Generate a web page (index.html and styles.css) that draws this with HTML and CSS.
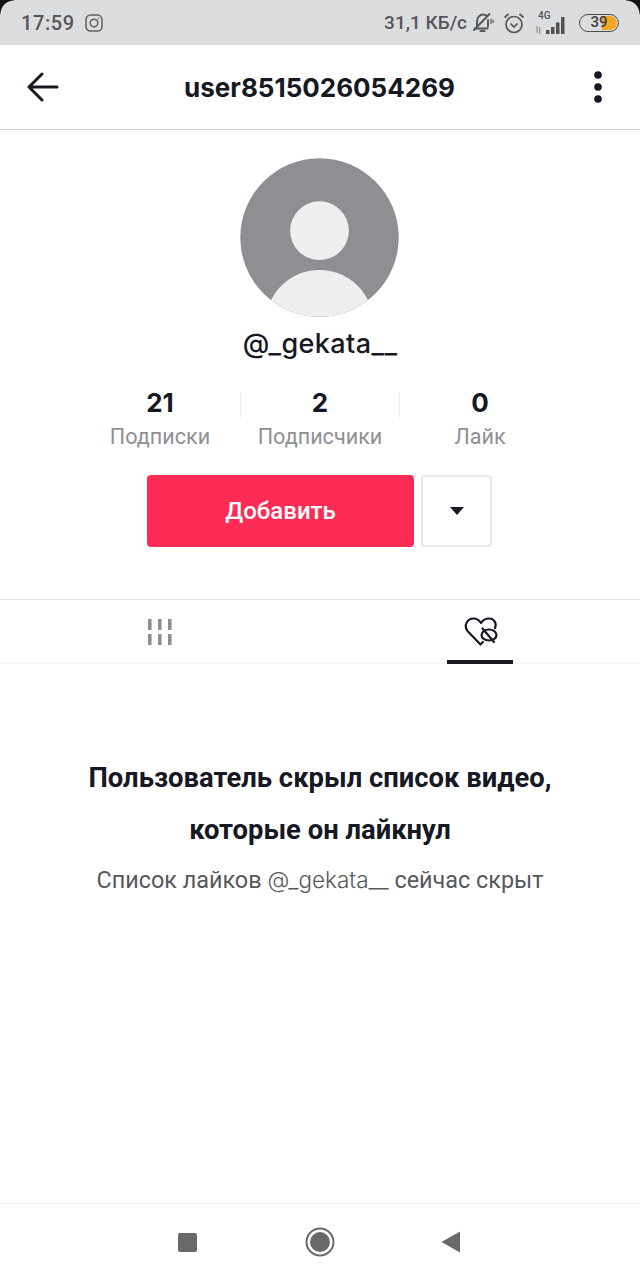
FILE: index.html
```html
<!DOCTYPE html>
<html>
<head>
    <title>user8515026054269</title>
    <link rel="stylesheet" href="styles.css">
</head>
<body>
<div class="phone">
    <div class="status">
        <span class="corner corner-left"></span>
        <span class="corner corner-right"></span>
        <div class="status-left">
            <span class="time">17:59</span>
            <svg class="insta" width="18" height="18" viewBox="0 0 18 18" fill="none" stroke="#5f6062" stroke-width="1.5">
                <rect x="1" y="1" width="16" height="16" rx="4.5"/>
                <circle cx="9" cy="9" r="3.8"/>
                <circle cx="13.4" cy="4.6" r="0.8" fill="#5f6062" stroke="none"/>
            </svg>
        </div>
        <div class="status-right">
            <span class="speed">31,1 КБ/с</span>
            <svg class="bell" width="22" height="22" viewBox="0 0 22 22" fill="none" stroke="#55565a" stroke-width="1.900" stroke-linecap="round">
                <path d="M3 16.500h12.500M5 14.500V9.500C5 5 8 2.500 11 2.500c1.500 0 3 .5 4 1.500M16 8v6.500"/>
                <path d="M8.500 19h4" stroke-width="2.200"/>
                <path d="M2 18L17.500 2"/>
                <path d="M19 7v4.500M21 8v2.500" stroke-width="1.200"/>
            </svg>
            <svg class="alarm" width="22" height="22" viewBox="0 0 22 22" fill="none" stroke="#55565a" stroke-width="1.700">
                <circle cx="11" cy="12.500" r="8"/>
                <path d="M7.500 11.500l3.500 3.500 3.500-3.500"/>
                <path d="M1.500 5.500L5.500 2M20.500 5.500L16.500 2"/>
            </svg>
            <div class="signal">
                <span class="net">4G</span>
                <svg width="34" height="18" viewBox="0 0 34 18" fill="#505155">
                    <path d="M0.500 9h1.300v7H0.500zM3 10h1.300v7H3z" opacity="0.5"/>
                    <rect x="10" y="13" width="3.500" height="4"/>
                    <rect x="15" y="10" width="3.500" height="7"/>
                    <rect x="20" y="5.500" width="3.500" height="11.500"/>
                    <rect x="25" y="0" width="3.500" height="17"/>
                </svg>
            </div>
            <div class="battery">
                <span class="battery-fill"></span>
                <span class="battery-num">39</span>
            </div>
        </div>
    </div>

    <div class="topbar">
        <svg width="34" height="30" viewBox="0 0 34 30" fill="none" stroke="#161823" stroke-width="3" stroke-linecap="round" stroke-linejoin="round">
            <path d="M31 15H3M16 2L3 15l13 13"/>
        </svg>
        <h1 class="nick">user8515026054269</h1>
        <svg class="more" width="10" height="32" viewBox="0 0 10 32" fill="#161823">
            <circle cx="5" cy="4" r="3.800"/>
            <circle cx="5" cy="16" r="3.800"/>
            <circle cx="5" cy="28" r="3.800"/>
        </svg>
    </div>

    <div class="profile">
        <svg class="avatar" width="159" height="159" viewBox="0 0 159 159">
            <defs><clipPath id="round"><circle cx="79.500" cy="79.500" r="79.200"/></clipPath></defs>
            <circle cx="79.500" cy="79.500" r="79.200" fill="#8e8f93"/>
            <circle cx="79.500" cy="72.700" r="29.400" fill="#efefef"/>
            <circle cx="79.500" cy="166" r="54" fill="#efefef" clip-path="url(#round)"/>
        </svg>
        <div class="handle">@_gekata__</div>
        <div class="stats">
            <div class="stat">
                <b>21</b>
                <span>Подписки</span>
            </div>
            <div class="stat stat-mid">
                <b>2</b>
                <span>Подписчики</span>
            </div>
            <div class="stat">
                <b>0</b>
                <span>Лайк</span>
            </div>
        </div>
        <div class="actions">
            <button class="add">Добавить</button>
            <button class="drop"><span class="caret"></span></button>
        </div>
    </div>

    <div class="tabs">
        <div class="tab">
            <svg width="24" height="27" viewBox="0 0 24 27" fill="#909090">
                <rect x="0" y="0" width="3.600" height="11"/>
                <rect x="10" y="0" width="3.600" height="11"/>
                <rect x="20" y="0" width="3.600" height="11"/>
                <rect x="0" y="15" width="3.600" height="11"/>
                <rect x="10" y="15" width="3.600" height="11"/>
                <rect x="20" y="15" width="3.600" height="11"/>
            </svg>
        </div>
        <div class="tab tab-active">
            <svg width="35" height="29" viewBox="0 0 35 29" fill="none" stroke="#161823" stroke-width="2.200" stroke-linecap="round" stroke-linejoin="round">
                <path d="M19 25l-2.500 2.500L3.500 14C-.5 9 3 1.500 9.500 1.500c3 0 5.500 1.500 7.500 4.500 2-3 5-4.500 8-4.500 5 0 8 4.500 6 9.500"/>
                <ellipse cx="25" cy="18" rx="7.500" ry="5.500"/>
                <path d="M18.500 11.500L30 25"/>
            </svg>
        </div>
    </div>

    <div class="empty">
        <h2>Пользователь скрыл список видео,<br>которые он лайкнул</h2>
        <p>Список лайков <span class="empty-handle">@_gekata__</span> сейчас скрыт</p>
    </div>

    <div class="navbar">
        <span class="nav-square"></span>
        <svg class="nav-home" width="30" height="30" viewBox="0 0 30 30">
            <circle cx="15" cy="15" r="13.500" fill="none" stroke="#696969" stroke-width="2"/>
            <circle cx="15" cy="15" r="10" fill="#696969"/>
        </svg>
        <svg width="19" height="22" viewBox="0 0 19 22" fill="#696969">
            <path d="M19 .5v21L.5 11z"/>
        </svg>
    </div>
</div>
</body>
</html>
```

FILE: styles.css
```css
html, body {
    margin: 0;
    height: 100%;
    background-color: #fff;
}

.phone {
    display: flex;
    flex-direction: column;
    width: 640px;
    height: 1280px;
    font-family: Roboto, "Liberation Sans", sans-serif;
    color: #161823;
    overflow: hidden;
}

/* status bar */
.status {
    position: relative;
    display: flex;
    justify-content: space-between;
    align-items: center;
    height: 45px;
    padding: 0 21px;
    box-sizing: border-box;
    background-color: #dcddde;
    color: #55565a;
}

.corner {
    position: absolute;
    top: 0;
    width: 14px;
    height: 14px;
    background: radial-gradient(circle at 100% 100%, transparent 13px, #111 14px);
}

.corner-left {
    left: 0;
}

.corner-right {
    right: 0;
    transform: scaleX(-1);
}

.status-left, .status-right {
    display: flex;
    align-items: center;
}

.time {
    font-size: 20px;
    font-weight: 500;
    letter-spacing: 0.6px;
    margin-right: 10px;
}

.speed {
    font-size: 19px;
    font-weight: 500;
    margin-right: 5px;
}

.bell {
    margin-right: 9px;
}

.alarm {
    margin-right: 11px;
}

.signal {
    position: relative;
    width: 34px;
    height: 24px;
    display: flex;
    align-items: flex-end;
}

.net {
    position: absolute;
    left: 2px;
    top: -1px;
    font-size: 10px;
    font-weight: 500;
}

.battery {
    position: relative;
    width: 40px;
    height: 18px;
    margin-left: 9px;
    border: 1.5px solid #4a4b4d;
    border-radius: 9px;
    box-sizing: border-box;
    overflow: hidden;
    text-align: center;
}

.battery-fill {
    position: absolute;
    right: 1px;
    top: 1px;
    bottom: 1px;
    width: 15px;
    background-color: #f5a623;
    border-radius: 0 7px 7px 0;
}

.battery-num {
    position: relative;
    display: block;
    font-size: 15px;
    line-height: 15px;
    font-weight: 500;
    color: #3c3d40;
}

/* header */
.topbar {
    display: grid;
    grid-template-columns: 1fr auto 1fr;
    align-items: center;
    height: 85px;
    padding: 0 37px 0 26px;
    box-sizing: border-box;
    border-bottom: 1px solid #d2d2d3;
}

.nick {
    margin: 0 0 0 10px;
    font-family: Inter, sans-serif;
    font-size: 26px;
    font-weight: 700;
}

.more {
    justify-self: end;
}

/* profile */
.profile {
    display: flex;
    flex-direction: column;
    align-items: center;
    height: 470px;
    padding-top: 28px;
    box-sizing: border-box;
    border-bottom: 1px solid #e4e4e5;
}

.avatar {
    display: block;
    margin-right: 1px;
}

.handle {
    margin-top: 10px;
    font-family: Inter, sans-serif;
    font-size: 27px;
    line-height: 34px;
    letter-spacing: 0.4px;
    font-weight: 500;
}

.stats {
    display: flex;
    margin-top: 24px;
}

.stat {
    display: flex;
    flex-direction: column;
    align-items: center;
    width: 160px;
}

.stat b {
    font-family: Inter, sans-serif;
    font-size: 26px;
    line-height: 35px;
    font-weight: 700;
}

.stat span {
    font-size: 21.6px;
    line-height: 34px;
    color: #8f9094;
}

.stat-mid {
    background: linear-gradient(#eeeeee, #eeeeee) left 7px / 1px 26px no-repeat,
        linear-gradient(#eeeeee, #eeeeee) right 7px / 1px 26px no-repeat;
}

.actions {
    display: flex;
    gap: 7px;
    margin: 21px 1px 0 0;
}

.add {
    width: 267px;
    height: 72px;
    border: none;
    border-radius: 4px;
    background-color: #fe2c55;
    color: #fff;
    font-family: Roboto, sans-serif;
    font-size: 24px;
    font-weight: 500;
}

.drop {
    display: flex;
    justify-content: center;
    align-items: center;
    width: 71px;
    height: 72px;
    padding: 0;
    border: 2px solid #e8e8e9;
    border-radius: 4px;
    background-color: #fff;
}

.caret {
    width: 0;
    height: 0;
    border-left: 7px solid transparent;
    border-right: 7px solid transparent;
    border-top: 8px solid #161823;
}

/* tabs */
.tabs {
    display: flex;
    height: 64px;
    box-sizing: border-box;
    border-bottom: 1px solid #f6f6f6;
}

.tab {
    flex: 1;
    display: flex;
    justify-content: center;
    padding-top: 19px;
    box-sizing: border-box;
    position: relative;
}

.tab-active {
    padding-top: 17px;
}

.tab-active svg {
    margin-left: 2px;
}

.tab-active::after {
    content: "";
    position: absolute;
    left: 127px;
    bottom: -1px;
    width: 66px;
    height: 4px;
    background-color: #161823;
}

/* empty message */
.empty {
    flex: 1;
    text-align: center;
    padding-top: 88px;
}

.empty h2 {
    margin: 0;
    font-size: 27.4px;
    line-height: 52px;
    font-weight: 700;
}

.empty p {
    margin: 9px 0 0;
    font-size: 23.4px;
    line-height: 30px;
    color: #57585c;
}

.empty-handle {
    font-family: Inter, sans-serif;
    font-size: 22.5px;
    font-weight: 300;
}

/* android nav */
.navbar {
    display: flex;
    justify-content: center;
    align-items: center;
    height: 77px;
    padding-right: 2px;
    box-sizing: border-box;
    border-top: 1px solid #ececec;
}

.nav-square {
    width: 19px;
    height: 19px;
    border-radius: 2px;
    background-color: #696969;
}

.nav-home {
    margin: 0 106px 0 108px;
}
```
